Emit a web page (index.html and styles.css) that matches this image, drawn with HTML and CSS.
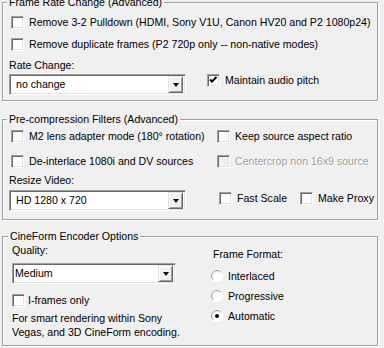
FILE: index.html
```html
<!DOCTYPE html>
<html>
<head>
<meta charset="utf-8">
<link rel="stylesheet" href="styles.css">
</head>
<body>
<div class="panel">
  <section class="group g1">
    <h2 class="group-title">Frame Rate Change (Advanced)</h2>
    <label class="check"><span class="cb"></span><span class="txt">Remove 3-2 Pulldown (HDMI, Sony V1U, Canon HV20 and P2 1080p24)</span></label>
    <label class="check row2"><span class="cb"></span><span class="txt">Remove duplicate frames (P2 720p only -- non-native modes)</span></label>
    <div class="field-label rate-label">Rate Change:</div>
    <div class="combo-row">
      <div class="combo"><span class="combo-text">no change</span><span class="combo-btn"><span class="arrow"></span></span></div>
      <label class="check"><span class="cb checked"><svg viewBox="0 0 13 13" width="13" height="13"><path d="M3 5.5 L5 7.5 L9.5 3" fill="none" stroke="#000" stroke-width="2"/></svg></span><span class="txt">Maintain audio pitch</span></label>
    </div>
  </section>

  <section class="group g2">
    <h2 class="group-title">Pre-compression Filters (Advanced)</h2>
    <div class="two-col">
      <label class="check"><span class="cb"></span><span class="txt">M2 lens adapter mode (180° rotation)</span></label>
      <label class="check"><span class="cb"></span><span class="txt">Keep source aspect ratio</span></label>
    </div>
    <div class="two-col row2b">
      <label class="check"><span class="cb"></span><span class="txt">De-interlace 1080i and DV sources</span></label>
      <label class="check disabled"><span class="cb"></span><span class="txt">Centercrop non 16x9 source</span></label>
    </div>
    <div class="field-label resize-label">Resize Video:</div>
    <div class="two-col combo-line">
      <div class="combo"><span class="combo-text">HD 1280 x 720</span><span class="combo-btn"><span class="arrow"></span></span></div>
      <div class="scale-opts">
        <label class="check fast"><span class="cb"></span><span class="txt">Fast Scale</span></label>
        <label class="check"><span class="cb"></span><span class="txt">Make Proxy</span></label>
      </div>
    </div>
  </section>

  <section class="group g3">
    <h2 class="group-title">CineForm Encoder Options</h2>
    <div class="enc">
      <div class="enc-left">
        <div class="field-label">Quality:</div>
        <div class="combo combo-q"><span class="combo-text">Medium</span><span class="combo-btn"><span class="arrow"></span></span></div>
        <label class="check iframes"><span class="cb"></span><span class="txt">I-frames only</span></label>
        <p class="note">For smart rendering within Sony<br>Vegas, and 3D CineForm encoding.</p>
      </div>
      <div class="enc-right">
        <div class="field-label ff-label">Frame Format:</div>
        <div class="radios">
          <label class="radio"><svg class="rb" viewBox="0 0 12 12" width="12" height="12"><circle cx="6" cy="6" r="5.5" fill="#fff"/><path d="M9.9 2.1 A5.5 5.5 0 0 0 2.1 9.9" fill="none" stroke="#a0a0a0"/><path d="M9.2 2.8 A4.5 4.5 0 0 0 2.8 9.2" fill="none" stroke="#e3e3e3"/><path d="M2.1 9.9 A5.5 5.5 0 0 0 9.9 2.1" fill="none" stroke="#fff"/></svg><span class="txt">Interlaced</span></label>
          <label class="radio"><svg class="rb" viewBox="0 0 12 12" width="12" height="12"><circle cx="6" cy="6" r="5.5" fill="#fff"/><path d="M9.9 2.1 A5.5 5.5 0 0 0 2.1 9.9" fill="none" stroke="#a0a0a0"/><path d="M9.2 2.8 A4.5 4.5 0 0 0 2.8 9.2" fill="none" stroke="#e3e3e3"/><path d="M2.1 9.9 A5.5 5.5 0 0 0 9.9 2.1" fill="none" stroke="#fff"/></svg><span class="txt">Progressive</span></label>
          <label class="radio"><svg class="rb" viewBox="0 0 12 12" width="12" height="12"><circle cx="6" cy="6" r="5.5" fill="#fff"/><path d="M9.9 2.1 A5.5 5.5 0 0 0 2.1 9.9" fill="none" stroke="#a0a0a0"/><path d="M9.2 2.8 A4.5 4.5 0 0 0 2.8 9.2" fill="none" stroke="#e3e3e3"/><path d="M2.1 9.9 A5.5 5.5 0 0 0 9.9 2.1" fill="none" stroke="#fff"/><circle cx="6" cy="6" r="2" fill="#000"/></svg><span class="txt">Automatic</span></label>
        </div>
      </div>
    </div>
  </section>
</div>
</body>
</html>
```

FILE: styles.css
```css
* { box-sizing: border-box; }
html, body {
  margin: 0;
  padding: 0;
  background: #f0f0f0;
}
body {
  width: 384px;
  height: 348px;
  overflow: hidden;
  font-family: "Liberation Sans", Arial, sans-serif;
  font-size: 10.6px;
  line-height: 13px;
  color: #000;
}
.panel {
  padding: 2px 0 0 2px;
  width: 380px;
}
.group {
  position: relative;
  width: 376px;
  border: 1px solid #a0a0a0;
  box-shadow: inset 1px 1px 0 #fff, 1px 1px 0 #fff;
  display: flex;
  flex-direction: column;
  align-items: flex-start;
}
.group-title {
  position: absolute;
  top: -7px;
  left: 4px;
  margin: 0;
  padding: 0 2px;
  font-size: 10.6px;
  font-weight: normal;
  line-height: 13px;
  background: #f0f0f0;
  white-space: nowrap;
}
.g1 { padding: 13px 6px 5px 6px; }
.g2 { margin-top: 18px; padding: 10px 6px 8px 6px; }
.g3 { margin-top: 16px; padding: 7px 6px 6px 9px; }
.g3 .group-title { left: 5px; }

.check {
  display: flex;
  align-items: center;
  height: 13px;
  gap: 5px;
  margin-left: 2px;
  white-space: nowrap;
}
.cb {
  flex: none;
  width: 13px;
  height: 13px;
  background: #fff;
  border-top: 1px solid #a0a0a0;
  border-left: 1px solid #a0a0a0;
  border-bottom: 1px solid #fff;
  border-right: 1px solid #fff;
  box-shadow: inset 1px 1px 0 #696969, inset -1px -1px 0 #e3e3e3;
  position: relative;
}
.cb svg { display: block; position: absolute; left: -1px; top: -1px; }
.disabled .cb { background: #f0f0f0; }
.disabled .txt { color: #a0a0a0; text-shadow: 1px 1px 0 #fff; }

.row2 { margin-top: 9px; }
.field-label { white-space: nowrap; }
.rate-label { margin-top: 8px; }
.combo-row {
  margin-top: 2px;
  display: flex;
  align-items: flex-start;
  gap: 19px;
}

.combo {
  position: relative;
  flex: none;
  width: 177px;
  height: 21px;
  background: #fff;
  border-top: 1px solid #a0a0a0;
  border-left: 1px solid #a0a0a0;
  border-bottom: 1px solid #fff;
  border-right: 1px solid #fff;
  box-shadow: inset 1px 1px 0 #696969, inset -1px -1px 0 #e3e3e3;
  display: flex;
  align-items: center;
  justify-content: space-between;
  padding: 2px 2px 2px 6px;
}
.combo-text { white-space: nowrap; }
.combo-btn {
  flex: none;
  width: 15px;
  height: 17px;
  background: #f0f0f0;
  border-top: 1px solid #e3e3e3;
  border-left: 1px solid #e3e3e3;
  border-right: 1px solid #696969;
  border-bottom: 1px solid #696969;
  box-shadow: inset 1px 1px 0 #fff, inset -1px -1px 0 #a0a0a0;
  display: flex;
  align-items: center;
  justify-content: center;
}
.arrow {
  width: 0;
  height: 0;
  border-left: 3.5px solid transparent;
  border-right: 3.5px solid transparent;
  border-top: 4px solid #000;
  margin-top: 1px;
}

.two-col {
  display: grid;
  grid-template-columns: 206px auto;
  align-items: start;
}
.row2b { margin-top: 12px; }
.resize-label { margin-top: 6px; }
.combo-line { margin-top: 3px; grid-template-columns: 208px auto; }
.scale-opts {
  display: flex;
  margin-top: 2px;
}
.fast { width: 79px; }

.enc {
  display: grid;
  grid-template-columns: 199px auto;
  align-items: start;
}
.combo-q {
  width: 164px;
  margin-top: 6px;
  padding-left: 2px;
}
.iframes { margin-left: 0; margin-top: 10px; gap: 3px; }
.note {
  margin: 4px 0 0 0;
  line-height: 14px;
  white-space: nowrap;
}
.ff-label { margin-top: 4px; margin-left: 2px; }
.radios {
  margin-top: 5px;
  display: flex;
  flex-direction: column;
}
.radio {
  display: flex;
  align-items: center;
  height: 20px;
  gap: 5px;
  white-space: nowrap;
}
.rb { flex: none; display: block; }
```
